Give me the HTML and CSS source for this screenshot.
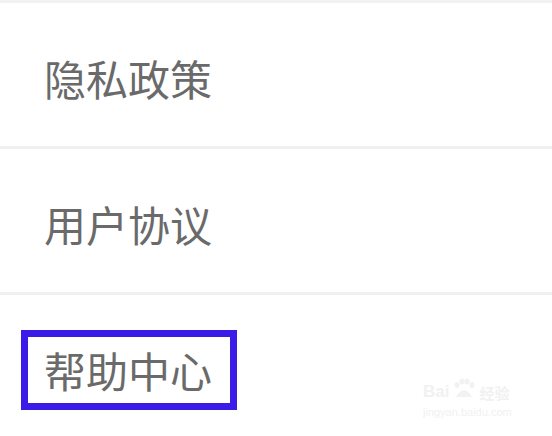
FILE: index.html
```html
<!DOCTYPE html>
<html lang="zh-CN">
<head>
  <meta charset="UTF-8" />
  <meta name="viewport" content="width=device-width, initial-scale=1" />
  <title>设置</title>
  <link rel="stylesheet" href="styles.css">
</head>
<body>

  <ul class="menu-list">
    <li class="menu-item"><span class="menu-label">隐私政策</span></li>
    <li class="menu-item"><span class="menu-label">用户协议</span></li>
    <li class="menu-item"><span class="menu-label is-marked">帮助中心</span></li>
  </ul>

  <!-- watermark -->
  <div class="watermark">
    <div class="wm-logo">
      <span>Bai</span>
      <svg class="wm-paw" width="26" height="22" viewBox="0 0 26 22">
        <ellipse cx="6" cy="7" rx="2.5" ry="3" />
        <ellipse cx="11" cy="3.5" rx="2.5" ry="3" />
        <ellipse cx="16" cy="3.5" rx="2.5" ry="3" />
        <ellipse cx="21" cy="7" rx="2.5" ry="3" />
        <path d="M5 19 Q13 5 21 19 Z" />
      </svg>
      <span>经验</span>
    </div>
    <div class="wm-url">jingyan.baidu.com</div>
  </div>

</body>
</html>
```

FILE: styles.css
```css
body {
  font-family: "Noto Sans CJK SC", "Noto Sans", sans-serif;
  margin: 0;
  background-color: white;
}

.menu-list {
  list-style: none;
  margin: 0;
  padding: 0;
  border-top: 3px solid #f2f2f2;
}

.menu-item {
  height: 146px;
  padding: 6px 0 0 21px;
  box-sizing: border-box;
  display: flex;
  align-items: center;
  border-bottom: 3px solid #f0f0f0;
}

.menu-label {
  font-size: 42px;
  line-height: 42px;
  color: #6a6a6a;
  padding: 12px 18px 12px 16px;
  border: 7px solid transparent;
}

.menu-label.is-marked {
  border-color: #3a1ce6;
}

.watermark {
  position: absolute;
  left: 423px;
  top: 378px;
  color: #f1f1f1;
  font-family: "Liberation Sans", sans-serif;
}

.wm-logo {
  display: flex;
  align-items: flex-end;
  font-size: 17px;
  font-weight: bold;
  line-height: 1;
}

.wm-logo span:last-child {
  font-family: "Noto Sans CJK SC", sans-serif;
  font-size: 15px;
}

.wm-paw {
  fill: #f2f2f2;
  margin: 0 2px;
}

.wm-url {
  font-size: 11px;
  margin-top: 6px;
}
```
